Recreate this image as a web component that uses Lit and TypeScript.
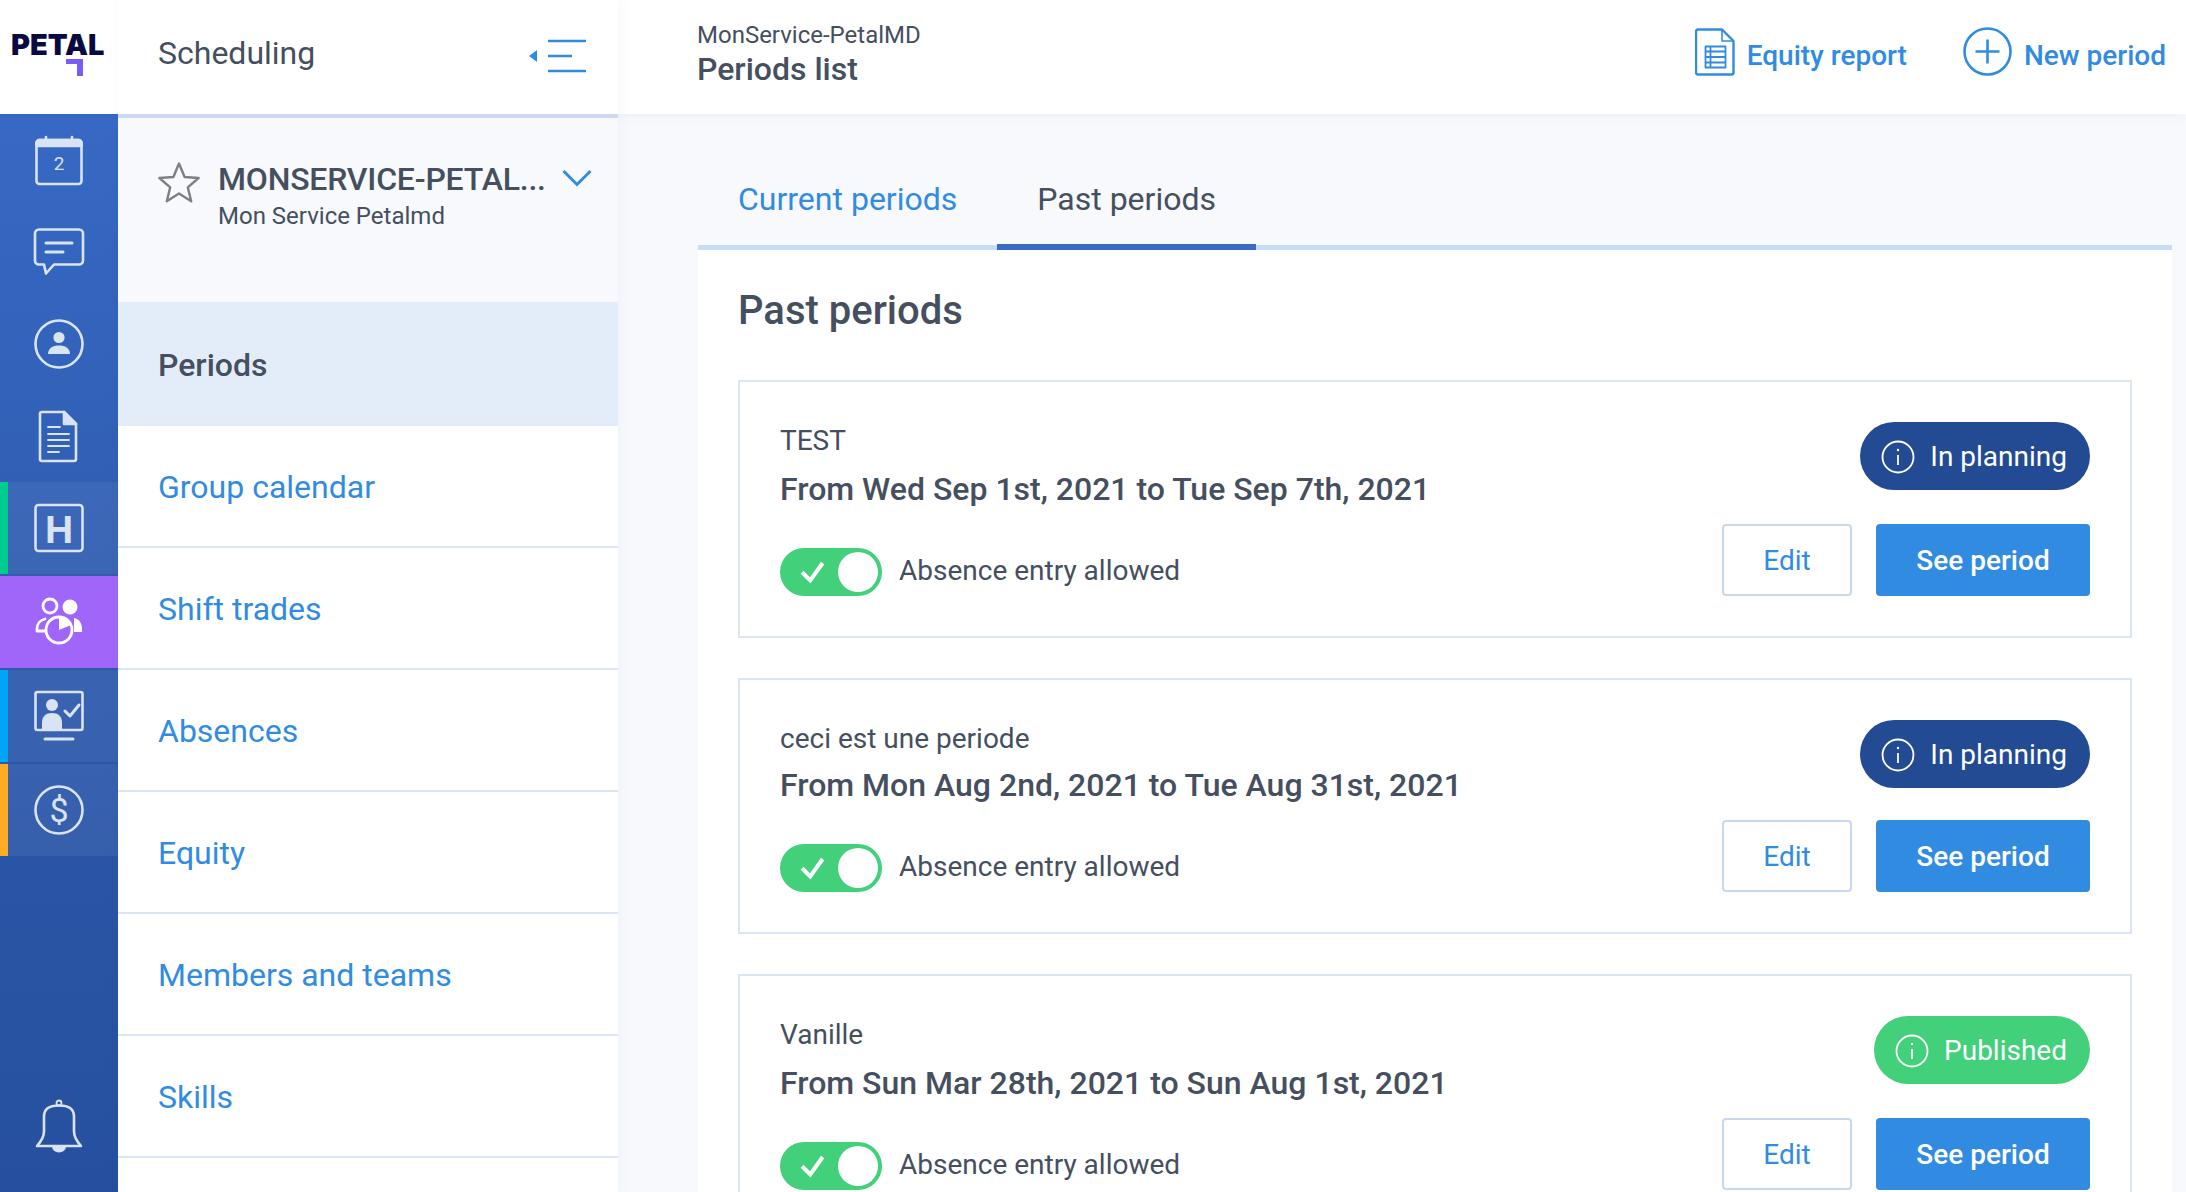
import { LitElement, html, css, svg } from "lit";
import { customElement } from "lit/decorators.js";

const railIcon = (body: unknown) => html`<svg class="ri" viewBox="0 0 56 56" fill="none" stroke="currentColor" stroke-width="2.6" stroke-linecap="round" stroke-linejoin="round">${body}</svg>`;

const icons = {
  cal: railIcon(svg`<rect x="5.5" y="8" width="45" height="44" rx="3"/><path d="M5.5 14V11a3 3 0 0 1 3-3h39a3 3 0 0 1 3 3v3z" fill="currentColor"/><path d="M15 5v3M41 5v3"/><text x="28" y="38" text-anchor="middle" font-family="Roboto" font-size="19" fill="currentColor" stroke="none">2</text>`),
  chat: railIcon(svg`<path d="M8 5.5h40a4 4 0 0 1 4 4v27a4 4 0 0 1-4 4H23l-8 9-2-9H8a4 4 0 0 1-4-4v-27a4 4 0 0 1 4-4z"/><path d="M15 19h26M15 28h17" stroke-width="3"/>`),
  user: railIcon(svg`<circle cx="28" cy="28" r="23.5"/><circle cx="28" cy="21.5" r="5.6" fill="currentColor" stroke="none"/><path d="M17 38c0-6 5-8.500 11-8.500s11 2.500 11 8.500z" fill="currentColor" stroke="none"/>`),
  doc: railIcon(svg`<path d="M11 4h22l12 12v35a2 2 0 0 1-2 2H11a2 2 0 0 1-2-2V6a2 2 0 0 1 2-2z"/><path d="M33 4v12h12z" fill="currentColor"/><path d="M17 19h12M17 26h21M17 32h21M17 38h21M17 44h11" stroke-width="1.800"/>`),
  h: railIcon(svg`<rect x="4.500" y="5" width="47" height="46" rx="3"/><text x="28" y="42.500" text-anchor="middle" font-family="'Liberation Sans'" font-weight="700" font-size="39" fill="currentColor" stroke="none">H</text>`),
  people: railIcon(svg`<circle cx="19" cy="12" r="7" stroke-width="2.800"/><circle cx="39" cy="13" r="7.500" fill="currentColor" stroke="none"/><path d="M14 25c-5 1-8 5-8 10v2h8" stroke-width="2.800"/><path d="M43 24c5 1 8 5 8 11v3h-8z" fill="currentColor" stroke="none"/><circle cx="28" cy="36" r="13" stroke-width="2.800" fill="#a066fa"/><path d="M28 36V23a13 13 0 0 1 12 8z" fill="currentColor" stroke="none"/>`),
  screen: railIcon(svg`<rect x="4.500" y="4" width="47" height="38" rx="2"/><circle cx="21" cy="17" r="6" fill="currentColor" stroke="none"/><path d="M11 42v-7c0-7 4-10 10-10s10 3 10 10v7z" fill="currentColor" stroke="none"/><path d="M34 23l5 5 9-11" stroke-width="3"/><path d="M14 51h28" stroke-width="3"/>`),
  dollar: railIcon(svg`<circle cx="28" cy="28" r="23.500"/><text x="28" y="40" text-anchor="middle" font-family="Roboto" font-size="34" fill="currentColor" stroke="none">$</text>`),
  bell: html`<svg class="bell" viewBox="0 0 50 56" fill="none" stroke="currentColor" stroke-width="2.600" stroke-linejoin="round"><circle cx="25" cy="5" r="2.500" stroke-width="1.800"/><path d="M25 7.500c-9 0-15 3-15 11v15c0 5-3 10-7 14.500h44c-4-4.500-7-9.500-7-14.500v-15c0-8-6-11-15-11z"/><path d="M18 48.500h14a7 6 0 0 1-14 0z" fill="currentColor" stroke="none"/></svg>`,
};

const info = html`<svg class="info" viewBox="0 0 34 34" fill="none" stroke="#fff" stroke-width="1.800"><circle cx="17" cy="17" r="15.500"/><path d="M17 15v10"/><circle cx="17" cy="10" r="1.200" fill="#fff" stroke="none"/></svg>`;

const check = html`<svg class="chk" viewBox="0 0 24 24" fill="none" stroke="#fff" stroke-width="3.600" stroke-linecap="square"><path d="M4 13l6 6L20 5"/></svg>`;

interface Period { name: string; range: string; status: string; published?: boolean; tight?: boolean }

const periods: Period[] = [
  { name: "TEST", range: "From Wed Sep 1st, 2021 to Tue Sep 7th, 2021", status: "In planning" },
  { name: "ceci est une periode", range: "From Mon Aug 2nd, 2021 to Tue Aug 31st, 2021", status: "In planning", tight: true },
  { name: "Vanille", range: "From Sun Mar 28th, 2021 to Sun Aug 1st, 2021", status: "Published", published: true },
];

@customElement("app-root")
export class AppRoot extends LitElement {
  static styles = css`
    :host { display: block; width: 100%; height: 100vh; overflow: hidden; font-family: Roboto, "Liberation Sans", sans-serif; color: #454f60; background: #f7f9fd; }
    .app { display: flex; height: 100vh; overflow: hidden; }
    .rail { width: 118px; flex: none; display: flex; flex-direction: column; }
    .logo { height: 114px; background: #fff; position: relative; flex: none; }
    .logo-text { display: block; padding: 27px 0 0 11px; font: 900 29px/36px Inter, Roboto, sans-serif; letter-spacing: 0; color: #0a0a42; }
    .logo-mark { display: block; position: absolute; left: 66px; top: 59px; width: 17px; height: 17px; }
    .rail-items { flex: 1; display: flex; flex-direction: column; background: linear-gradient(180deg, #3769c4 0%, #2a55a6 70%, #26509f 100%); color: #d9e3f4; }
    .ri-item { height: 92px; display: flex; align-items: center; justify-content: center; flex: none; }
    .ri-item.acc { background: rgba(255,255,255,.06); border-left: 8px solid var(--acc); padding-right: 8px; box-sizing: border-box; margin-bottom: 2px; }
    .ri-item.on { background: #a066fa; color: #fff; border-left: 0; padding: 0; }
    .ri { width: 56px; height: 56px; display: block; }
    .bell-wrap { margin-top: auto; height: 94px; display: flex; justify-content: center; }
    .bell { width: 50px; height: 56px; }

    .side { width: 500px; flex: none; display: flex; flex-direction: column; background: #fff; position: relative; z-index: 2; box-shadow: 2px 0 12px rgba(60,90,160,.05); }
    .side-head { height: 114px; flex: none; box-sizing: border-box; display: flex; align-items: center; justify-content: space-between; padding: 0 31px 8px 40px; font-size: 32px; color: #454f60; }
    .side-rule { height: 4px; background: #cdd9f0; flex: none; }
    .collapse { width: 58px; height: 34px; display: block; margin-top: 6px; }
    .org { height: 184px; box-sizing: border-box; flex: none; background: #f7f9fd; display: flex; padding: 32px 26px 0 40px; }
    .star { width: 42px; height: 42px; flex: none; margin: 11px 18px 0 0; }
    .org-txt { flex: 1; min-width: 0; }
    .org-title { font-size: 32px; line-height: 38px; font-weight: 500; margin-top: 10px; letter-spacing: -0.2px; white-space: nowrap; overflow: hidden; }
    .org-sub { font-size: 24px; line-height: 30px; margin-top: 3px; }
    .chev { width: 30px; height: 18px; flex: none; margin-top: 19px; margin-left: -1px; }
    .menu-item { height: 122px; box-sizing: border-box; display: flex; align-items: center; padding: 2px 0 0 40px; font-size: 32px; color: #318ce1; border-bottom: 2px solid #dbe5f6; background: #fff; flex: none; }
    .menu-item.on { background: #e3edf9; color: #454f60; font-weight: 500; border-bottom: 0; height: 124px; }

    .main { flex: 1; min-width: 0; display: flex; flex-direction: column; }
    .top { height: 114px; flex: none; background: #fff; display: flex; align-items: center; padding: 0 20px 0 79px; box-shadow: 0 2px 10px rgba(60,90,160,.06); position: relative; z-index: 1; }
    .crumbs { flex: 1; }
    .crumb { font-size: 24px; line-height: 30px; margin-top: -7px; }
    .page-title { font-size: 32px; line-height: 38px; font-weight: 500; }
    .act { display: flex; align-items: center; color: #318ce1; font-size: 28px; font-weight: 500; margin-top: -11px; }
    .act span { position: relative; top: 4px; }
    .act svg { display: block; }
    .act.a1 { margin-right: 56px; gap: 12px; }
    .act.a2 { gap: 12px; }
    .content { margin: 0 14px 0 80px; flex: 1; }
    .tabs { height: 136px; box-sizing: border-box; display: flex; align-items: flex-end; border-bottom: 5px solid #c9dcf6; }
    .tab { font-size: 32px; height: 85px; box-sizing: border-box; line-height: 68px; padding: 0 40px; color: #318ce1; margin-bottom: -5px; border-bottom: 6px solid transparent; }
    .tab.on { color: #454f60; border-bottom-color: #3a6bc6; }
    .panel { background: #fff; padding: 0 40px; height: 1000px; }
    h2 { margin: 0; padding-top: 37px; height: 130px; box-sizing: border-box; font-size: 40px; line-height: 48px; font-weight: 500; }
    .card { height: 258px; box-sizing: border-box; border: 2px solid #dbe5f6; padding: 40px; display: flex; justify-content: space-between; margin-bottom: 40px; }
    .card.tight { height: 256px; }
    .left { display: flex; flex-direction: column; }
    .name { font-size: 28px; line-height: 36px; position: relative; top: 1px; }
    .range { font-size: 32px; line-height: 36px; margin-top: 13px; font-weight: 500; }
    .tight .range { margin-top: 11px; }
    .tog { margin-top: auto; display: flex; align-items: center; gap: 17px; font-size: 28px; }
    .tog span { margin-bottom: 3px; }
    .switch { width: 102px; height: 48px; border-radius: 24px; background: #42d07b; position: relative; flex: none; }
    .knob { position: absolute; right: 4px; top: 4px; width: 40px; height: 40px; border-radius: 50%; background: #fff; }
    .chk { position: absolute; left: 19px; top: 11px; width: 27px; height: 27px; }
    .right { display: flex; flex-direction: column; align-items: flex-end; justify-content: space-between; }
    .pill { height: 68px; box-sizing: border-box; border-radius: 34px; background: #234b94; color: #fff; display: flex; align-items: center; gap: 15px; padding: 0 23px 0 21px; font-size: 28px; }
    .pill.pub { background: #42d07b; }
    .info { width: 34px; height: 34px; display: block; flex: none; margin-top: 2px; }
    .btns { display: flex; gap: 24px; }
    .btn { height: 72px; box-sizing: border-box; border-radius: 4px; display: flex; align-items: center; justify-content: center; font-size: 28px; }
    .edit { width: 130px; border: 2px solid #c9d7f0; color: #318ce1; background: #fff; }
    .see { width: 214px; background: #318ce1; color: #fff; font-weight: 500; }
  `;

  render() {
    return html`<div class="app">
      <div class="rail">
        <div class="logo">
          <span class="logo-text">PETAL</span>
          <svg class="logo-mark" viewBox="0 0 17 17"><path d="M0 0h17v17h-6V5H0z" fill="#7a5cf5"/></svg>
        </div>
        <div class="rail-items">
          <div class="ri-item">${icons.cal}</div>
          <div class="ri-item">${icons.chat}</div>
          <div class="ri-item">${icons.user}</div>
          <div class="ri-item">${icons.doc}</div>
          <div class="ri-item acc" style="--acc:#00cc8f">${icons.h}</div>
          <div class="ri-item acc on">${icons.people}</div>
          <div class="ri-item acc" style="--acc:#00a5f5">${icons.screen}</div>
          <div class="ri-item acc" style="--acc:#ffab24">${icons.dollar}</div>
          <div class="bell-wrap">${icons.bell}</div>
        </div>
      </div>
      <div class="side">
        <div class="side-head">
          <span>Scheduling</span>
          <svg class="collapse" viewBox="0 0 58 34" fill="none" stroke="#318ce1" stroke-width="2.600"><path d="M0 17l8-6v12z" fill="#318ce1" stroke="none"/><path d="M19 2h38M19 17h24M19 32h38"/></svg>
        </div>
        <div class="side-rule"></div>
        <div class="org">
          <svg class="star" viewBox="0 0 42 42" fill="none" stroke="#7c7f85" stroke-width="2.400" stroke-linejoin="round"><path d="M21 2.500l5.600 13.500 14 1-10.800 9.300 3.400 14L21 32.500 8.800 40.300l3.400-14L1.400 17l14-1z"/></svg>
          <div class="org-txt">
            <div class="org-title">MONSERVICE-PETAL...</div>
            <div class="org-sub">Mon Service Petalmd</div>
          </div>
          <svg class="chev" viewBox="0 0 30 18" fill="none" stroke="#318ce1" stroke-width="3"><path d="M1.500 2L15 15.500 28.500 2"/></svg>
        </div>
        <div class="menu-item on">Periods</div>
        ${["Group calendar", "Shift trades", "Absences", "Equity", "Members and teams", "Skills"].map((t) => html`<div class="menu-item">${t}</div>`)}
      </div>
      <div class="main">
        <div class="top">
          <div class="crumbs">
            <div class="crumb">MonService-PetalMD</div>
            <div class="page-title">Periods list</div>
          </div>
          <div class="act a1">
            <svg width="40" height="48" viewBox="0 0 40 48" fill="none" stroke="#318ce1" stroke-width="2.400" stroke-linejoin="round"><path d="M3 1.500h24l11.500 11.500v31.500a2 2 0 0 1-2 2H3a2 2 0 0 1-2-2V3.500a2 2 0 0 1 2-2z"/><path d="M27 1.500v11.500h11.500" stroke-width="1.600"/><path d="M10.500 18.500h20v21h-20zM10.500 23.500h20M10.500 29h20M10.500 34.500h20M15.500 18.500v21" stroke-width="1.800"/></svg>
            <span>Equity report</span>
          </div>
          <div class="act a2">
            <svg width="49" height="49" viewBox="0 0 49 49" fill="none" stroke="#318ce1" stroke-width="2.600"><circle cx="24.500" cy="24.500" r="23"/><path d="M24.500 12.500v24M12.500 24.500h24"/></svg>
            <span>New period</span>
          </div>
        </div>
        <div class="content">
          <div class="tabs">
            <div class="tab">Current periods</div>
            <div class="tab on">Past periods</div>
          </div>
          <div class="panel">
            <h2>Past periods</h2>
            ${periods.map((p) => html`<div class="card ${p.tight ? "tight" : ""}">
              <div class="left">
                <div class="name">${p.name}</div>
                <div class="range">${p.range}</div>
                <div class="tog"><div class="switch">${check}<div class="knob"></div></div><span>Absence entry allowed</span></div>
              </div>
              <div class="right">
                <div class="pill ${p.published ? "pub" : ""}">${info}<span>${p.status}</span></div>
                <div class="btns"><div class="btn edit">Edit</div><div class="btn see">See period</div></div>
              </div>
            </div>`)}
          </div>
        </div>
      </div>
    </div>`;
  }
}
